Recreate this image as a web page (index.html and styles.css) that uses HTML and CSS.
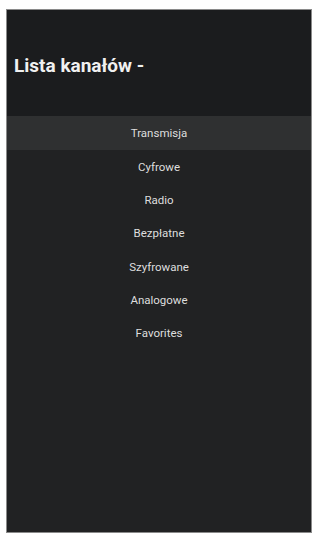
FILE: index.html
```html
<!DOCTYPE html>
<html>
<head>
<meta charset="utf-8">
<link rel="stylesheet" href="styles.css">
</head>
<body>
<div class="panel">
  <div class="header"><h1 class="title">Lista kanałów -</h1></div>
  <ul class="list">
    <li class="item active">Transmisja</li>
    <li class="item">Cyfrowe</li>
    <li class="item">Radio</li>
    <li class="item">Bezpłatne</li>
    <li class="item">Szyfrowane</li>
    <li class="item">Analogowe</li>
    <li class="item">Favorites</li>
  </ul>
</div>
</body>
</html>
```
FILE: styles.css
```css
html, body { margin: 0; padding: 0; background: #ffffff; }
body { font-family: Roboto, "Liberation Sans", sans-serif; }
.panel {
  box-sizing: border-box;
  margin: 9px 0 0 6px;
  width: 306px;
  height: 524px;
  background: #212223;
  border: 1px solid #8a8a8a;
  display: flex;
  flex-direction: column;
}
.header {
  background: #1b1c1e;
  height: 106px;
  display: flex;
  align-items: center;
  padding: 4px 0 0 7px;
  box-sizing: border-box;
}
.title {
  margin: 0;
  color: #f0f0f0;
  font-size: 19px;
  font-weight: 700;
}
.list { list-style: none; margin: 0; padding: 0; }
.item {
  height: 33.3px;
  display: flex;
  align-items: center;
  justify-content: center;
  color: #dedede;
  font-size: 11.5px;
}
.item.active { background: #2f3031; height: 34px; }
```
